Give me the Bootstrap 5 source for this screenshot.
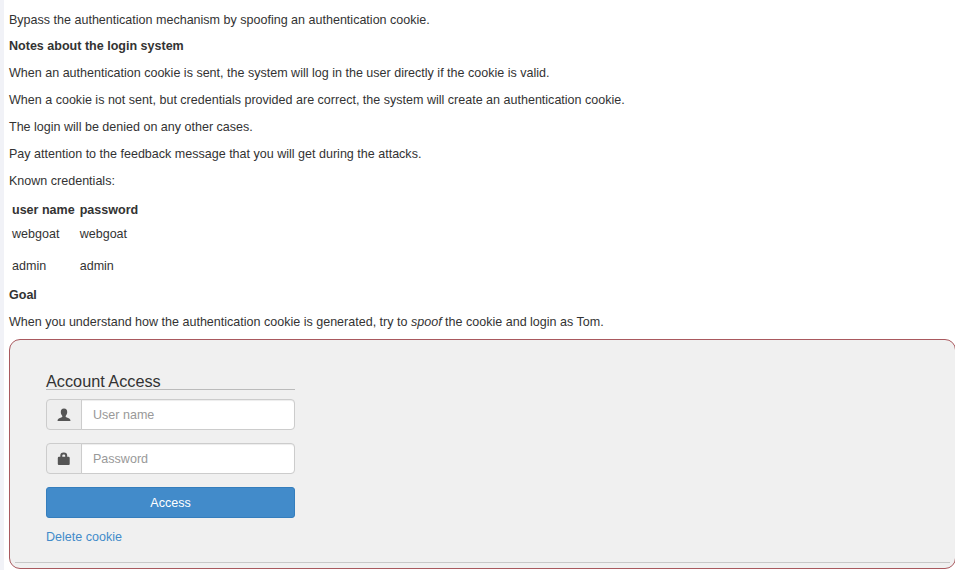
<!DOCTYPE html>
<html lang="en"><head><meta charset="utf-8"><title>Spoofing an authentication cookie</title>
<link href="https://cdn.jsdelivr.net/npm/bootstrap@5.3.0/dist/css/bootstrap.min.css" rel="stylesheet">
<style>
html{overflow:hidden}
body{font:12.54px/20px "Liberation Sans",Arial,sans-serif;color:#333;background:#fff;border-left:4px solid #f1f2f7;height:570px;overflow:hidden}
.lesson{padding:10px 0 0 5px}
.lesson p{margin-bottom:7px}
.lesson .intro{margin-bottom:6px}
.creds{border-collapse:separate;border-spacing:2px;margin:-1px 0 -2px}
.creds th,.creds td{padding:1px 2px 1px 1px}
.lesson .creds p{margin-bottom:8px}
.attack{background:#f0f0f0;border:1px solid #a9595e;border-radius:11px;height:230px;padding:32px 5px 0;margin:7px -1px 0 0}
.account{width:249px;margin-left:31px}
.account legend{font-size:16.25px;line-height:18px;border-bottom:1px solid #bbb;height:18px;margin-bottom:9px}
.account .input-group{height:31px;margin-bottom:13px}
.account .input-group-text{width:36px;background:#eee;border-color:#ccc;padding:0;color:#555;border-radius:4px}
.account .form-control{font-size:12.54px;border-color:#ccc;padding:1px 11px 0;border-radius:4px;box-shadow:inset 0 1px 1px rgba(0,0,0,.075)}
.account .form-control::placeholder{color:#999}
.account .btn{font-size:12.54px;height:31px;padding:1px 0 0;background:#428bca;border-color:#357ebd;color:#fff;border-radius:3px}
.account a{color:#428bca;margin-top:9px}
.rule{border-top:1px solid #c8c8c8;margin-top:15px}
</style>
<script src="https://cdn.jsdelivr.net/npm/bootstrap@5.3.0/dist/js/bootstrap.bundle.min.js"></script>
</head><body>
<main class="lesson">
<p class="intro">Bypass the authentication mechanism by spoofing an authentication cookie.</p>
<p class="fw-bold">Notes about the login system</p>
<p>When an authentication cookie is sent, the system will log in the user directly if the cookie is valid.</p>
<p>When a cookie is not sent, but credentials provided are correct, the system will create an authentication cookie.</p>
<p>The login will be denied on any other cases.</p>
<p>Pay attention to the feedback message that you will get during the attacks.</p>
<p>Known credentials:</p>
<table class="creds"><thead><tr><th>user name</th><th>password</th></tr></thead>
<tbody><tr><td><p>webgoat</p></td><td><p>webgoat</p></td></tr><tr><td><p>admin</p></td><td><p>admin</p></td></tr></tbody></table>
<p class="fw-bold">Goal</p>
<p>When you understand how the authentication cookie is generated, try to <em>spoof</em> the cookie and login as Tom.</p>
<section class="attack"><form class="account">
<legend>Account Access</legend>
<div class="input-group"><span class="input-group-text justify-content-center"><svg width="14" height="14" viewBox="0 0 14 14" fill="currentColor"><path d="M7 .5C4.700.5 3.800 2 3.800 4c0 1.700.7 2.900 1.400 3.800.3.700.1 1.200-.5 1.500L1.800 10.600Q.5 11.200.5 13h13q0-1.800-1.300-2.400L9.300 9.300c-.6-.3-.8-.8-.5-1.500.7-.9 1.400-2.100 1.400-3.800C10.200 2 9.300.5 7 .5z"/></svg></span><input class="form-control" placeholder="User name"></div>
<div class="input-group"><span class="input-group-text justify-content-center"><svg width="14" height="14" viewBox="0 0 14 14" fill="currentColor"><path fill-rule="evenodd" d="M3.300 4.800V3.600Q3.300.5 6.500.5h.5q3.200 0 3.200 3.100v1.200h1.300q1.200 0 1.200 1.200v6q0 1-1 1H1.800q-1 0-1-1V6Q.8 4.800 2 4.800zm2 0h2.900V3.600Q8.200 2.400 7 2.400h-.5Q5.300 2.400 5.300 3.600z"/></svg></span><input type="password" class="form-control" placeholder="Password"></div>
<button type="button" class="btn w-100 d-block">Access</button>
<a href="#" class="d-block text-decoration-none">Delete cookie</a>
</form><div class="rule"></div></section>
</main></body></html>
